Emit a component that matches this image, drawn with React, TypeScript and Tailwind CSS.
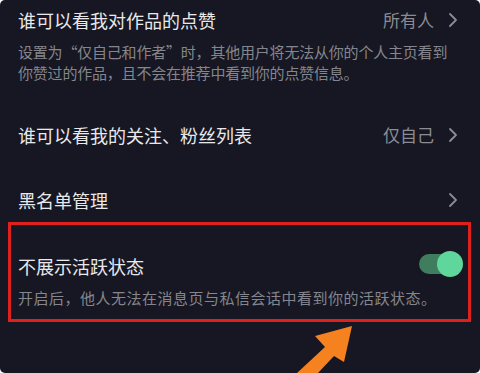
import React, { useState } from 'react';

const font = { fontFamily: '"Noto Sans CJK SC", "Noto Sans", sans-serif' };

function Chevron() {
  return (
    <svg width="10" height="16" viewBox="0 0 10 16" className="ml-[14px]">
      <path d="M2 2 L8 8 L2 14" fill="none" stroke="#8b8c93" strokeWidth="1.8" strokeLinecap="round" strokeLinejoin="round" />
    </svg>
  );
}

export default function App() {
  const [hidden, setHidden] = useState(true);

  return (
    <div className="w-[480px] h-[373px] bg-white">
      <div
        className="relative w-[480px] h-[373px] bg-[#161722] rounded-[5px] overflow-hidden text-[#e9e9ec]"
        style={font}
      >
        {/* 点赞可见 */}
        <div className="pl-[18px] pr-[22px] pt-2">
          <div className="flex items-center justify-between h-6">
            <span className="text-[18px] leading-6">谁可以看我对作品的点赞</span>
            <div className="flex items-center">
              <span className="text-[17px] text-[#8b8c93]">所有人</span>
              <Chevron />
            </div>
          </div>
          <p className="mt-[9px] text-[15px] leading-[21px] text-[#85868d] tracking-[-0.2px]">
            设置为“仅自己和作者”时，其他用户将无法从你的个人主页看到你赞过的作品，且不会在推荐中看到你的点赞信息。
          </p>
        </div>

        {/* 关注、粉丝列表 */}
        <div className="pl-[18px] pr-[22px] mt-10 flex items-center justify-between h-6">
          <span className="text-[18px] leading-6">谁可以看我的关注、粉丝列表</span>
          <div className="flex items-center">
            <span className="text-[17px] text-[#8b8c93]">仅自己</span>
            <Chevron />
          </div>
        </div>

        {/* 黑名单 */}
        <div className="pl-[18px] pr-[22px] mt-[41px] flex items-center justify-between h-6">
          <span className="text-[18px] leading-6">黑名单管理</span>
          <Chevron />
        </div>

        {/* 活跃状态（红框标注） */}
        <div className="mx-2 mt-[10px] w-[463px] border-[3px] border-[#e0201c] pl-[7px] pr-[8px] pt-[29px] pb-[11px]">
          <div className="flex items-center justify-between h-6">
            <span className="text-[18px] leading-6">不展示活跃状态</span>
            <button
              onClick={() => setHidden(!hidden)}
              className={`relative w-[40px] h-[20px] rounded-full mr-[1px] -mt-[4px] ${hidden ? 'bg-[#3f7d5e]' : 'bg-[#3a3b44]'}`}
            >
              <span
                className={`absolute top-[-3px] w-[26px] h-[26px] rounded-full ${hidden ? 'right-[-4px] bg-[#5fd69b]' : 'left-[-4px] bg-[#c9c9cf]'}`}
              />
            </button>
          </div>
          <p className="mt-[9px] text-[15px] leading-[21px] text-[#85868d] tracking-[0.5px]">
            开启后，他人无法在消息页与私信会话中看到你的活跃状态。
          </p>
        </div>

        {/* 橙色箭头 */}
        <svg className="absolute left-[290px] top-[320px]" width="80" height="53" viewBox="290 320 80 53">
          <polygon
            points="352,326 315,336 325,347 297,373 318,373 334,356 344,362"
            fill="#f6821f"
          />
        </svg>
      </div>
    </div>
  );
}
